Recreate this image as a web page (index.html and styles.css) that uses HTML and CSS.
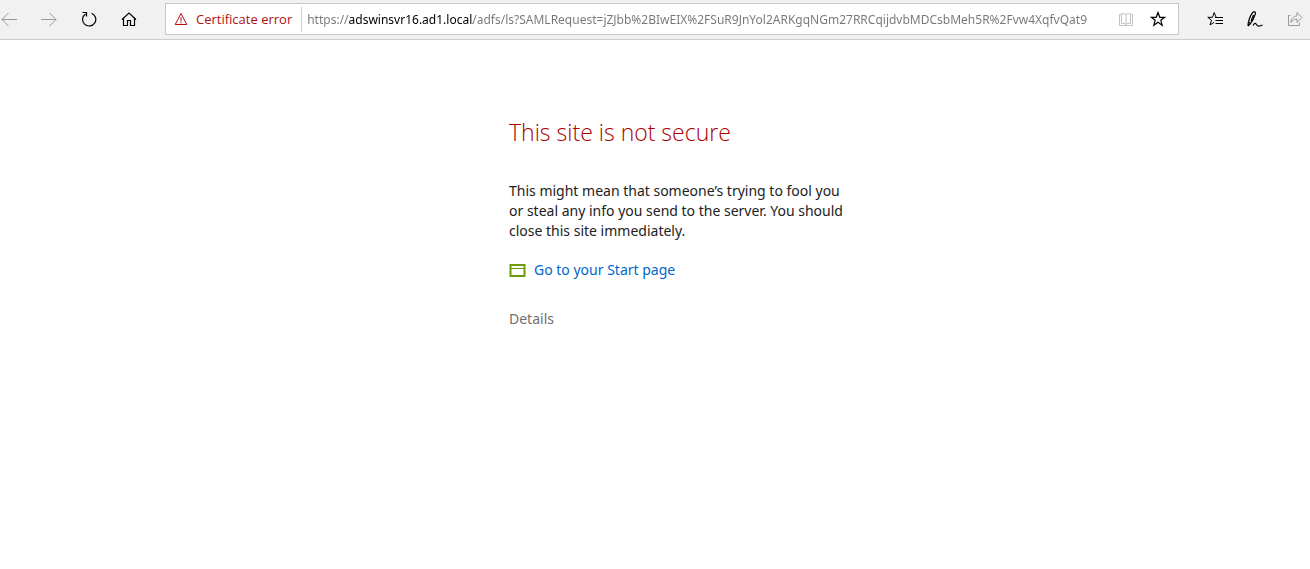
FILE: index.html
```html
<!DOCTYPE html>
<html lang="en">
<head>
  <meta charset="utf-8">
  <title>This site is not secure</title>
  <link rel="stylesheet" href="styles.css">
</head>
<body>
  <header class="toolbar">
    <nav class="tools">
      <button class="icon-btn muted" type="button" aria-label="Back" disabled>
        <svg viewBox="0 0 16 16"><path d="M16 8.5H1M7.5 2L1 8.5L7.5 15"/></svg>
      </button>
      <button class="icon-btn muted" type="button" aria-label="Forward" disabled>
        <svg viewBox="0 0 16 16"><path d="M0 8.5H15M8.5 2L15 8.5L8.5 15"/></svg>
      </button>
      <button class="icon-btn" type="button" aria-label="Refresh">
        <svg viewBox="0 0 16 16"><path class="bold" d="M10.5 2.2A6.6 6.6 0 1 1 4.5 2.9"/><path class="bold" d="M1.5 1.5H5.5V5.5"/></svg>
      </button>
      <button class="icon-btn" type="button" aria-label="Home">
        <svg viewBox="0 0 16 16"><path class="bold" d="M1 8.5L8 2L15 8.5M2.5 7.5V14.5H6.5V9.5H9.5V14.5H13.5V7.5"/></svg>
      </button>
    </nav>

    <form class="address">
      <button class="cert" type="button">
        <svg viewBox="0 0 14 14"><path d="M7 1.5L12.8 12.5H1.2ZM7 5V9.5M7 10.3V11.5"/></svg>
        Certificate error
      </button>
      <input class="url" type="text" aria-label="Address" spellcheck="false" value="https://adswinsvr16.ad1.local/adfs/ls?SAMLRequest=jZJbb%2BIwEIX%2FSuR9JnYol2ARKgqNGm27RRCqijdvbMDCsbMeh5R%2Fvw4XqfvQat9">
      <button class="icon-btn faint" type="button" aria-label="Reading view" disabled>
        <svg viewBox="0 0 16 16"><path d="M8 3.5V14.5M8 3.5C7 2.5 4.5 2.5 3.5 2.5V12.5H7L8 13.5L9 12.5H12.5V2.5C11.5 2.5 9 2.5 8 3.5M3.5 3.5H1.5V14.5H14.5V3.5H12.5"/></svg>
      </button>
      <button class="icon-btn" type="button" aria-label="Add to favorites">
        <svg viewBox="0 0 16 16"><path class="bold" d="M8 1.5L9.8 6.3H14.7L10.8 9.3L12.2 14.2L8 11.3L3.8 14.2L5.2 9.3L1.3 6.3H6.2Z"/></svg>
      </button>
    </form>

    <nav class="tools">
      <button class="icon-btn" type="button" aria-label="Favorites">
        <svg viewBox="0 0 16 16"><path d="M10 6.3H9L7.2 1.5L5.5 6.3H.8L4.5 9.2L3 14L7.2 11.3"/><path class="bold" d="M8 6.5H16M8.5 9.5H16M8.5 12.5H16"/></svg>
      </button>
      <button class="icon-btn" type="button" aria-label="Make a web note">
        <svg viewBox="0 0 16 16"><path class="bold" d="M1 15L1.3 11.5C2.5 7 4.5 2.5 6 1.2C7.5 0 9 1 8.3 3C7.2 6.5 5.5 10 3.5 12.5L1 15M1.5 11L3.5 12.5M4 10L6.5 4"/><path class="bold" d="M6 14.5C7.5 11.5 8.5 12 9.5 13.5C10.5 15.5 12.5 15.5 15.5 14"/></svg>
      </button>
      <button class="icon-btn muted" type="button" aria-label="Share" disabled>
        <svg viewBox="0 0 16 16"><path d="M3.5 4.5H1.5V14.5H12.5V11.5M4 11.5C4 7.5 6.5 5 10 5V1.5L15 6.5L10 11.5V8C7.5 8 5.5 9 4 11.5Z"/></svg>
      </button>
    </nav>
  </header>

  <main class="warning">
    <h1>This site is not secure</h1>
    <p>This might mean that someone’s trying to fool you or steal any info you send to the server. You should close this site immediately.</p>
    <a class="start-link" href="#">
      <svg viewBox="0 0 16 14"><path d="M1 2H15V13H1Z"/><path class="thin" d="M1 5.5H15"/></svg>
      Go to your Start page
    </a>
    <a class="details" href="#">Details</a>
  </main>
</body>
</html>
```

FILE: styles.css
```css
* {
  box-sizing: border-box;
}
body {
  margin: 0;
  background: #fff;
  font-family: "Noto Sans", "Open Sans", sans-serif;
  font-size: 14px;
  line-height: 20px;
  color: #222;
}
button {
  padding: 0;
  border: none;
  background: none;
  font: inherit;
}
svg {
  display: block;
  flex: none;
  fill: none;
  stroke: currentColor;
}
h1, p {
  margin: 0;
}

/* Toolbar */
.toolbar {
  display: flex;
  gap: 28px;
  height: 40px;
  padding: 3px 7px 4px 1px;
  background: #f1f1f1;
  border-bottom: 1px solid #ccc;
}
.tools {
  display: flex;
  align-items: center;
  gap: 24px;
}
.icon-btn {
  flex: none;
  color: #000;
}
.icon-btn svg {
  width: 16px;
  height: 16px;
}
.icon-btn .bold {
  stroke-width: 1.2;
}
.icon-btn.muted {
  color: #999;
}
.icon-btn.faint {
  color: #c4c4c4;
}

/* Address bar */
.address {
  display: flex;
  flex: 1;
  align-items: center;
  min-width: 0;
  padding-right: 12px;
  background: #fff;
  border: 1px solid #c8c8c8;
}
.cert {
  display: flex;
  align-items: center;
  gap: 8px;
  height: 25px;
  padding: 0 9px 0 8px;
  border-right: 1px solid #ccc;
  color: #b01010;
  font-family: "Open Sans", "Noto Sans", sans-serif;
  font-size: 13px;
  white-space: nowrap;
}
.cert svg {
  width: 14px;
  height: 14px;
}
.url {
  flex: 1;
  min-width: 0;
  height: 24px;
  margin: 0 11px 0 5px;
  padding: 0;
  border: none;
  outline: none;
  font-family: inherit;
  font-size: 12px;
  /* host name darker than the rest */
  background: linear-gradient(to right, #767676 42px, #000 42px, #000 166px, #767676 166px);
  -webkit-background-clip: text;
  background-clip: text;
  -webkit-text-fill-color: transparent;
}
.address .icon-btn + .icon-btn {
  margin-left: 16px;
}

/* Warning */
.warning {
  display: flex;
  flex-direction: column;
  align-items: flex-start;
  padding: 76px 0 0 calc(50% - 146px);
}
.warning h1 {
  margin-bottom: 33px;
  color: #a80000;
  font-family: "Open Sans", "Noto Sans", sans-serif;
  font-size: 23px;
  font-weight: 300;
  line-height: 32px;
}
.warning p {
  max-width: 344px;
  margin-bottom: 19px;
}
.start-link {
  display: flex;
  align-items: center;
  gap: 8px;
  margin-bottom: 29px;
  color: #0066cc;
  text-decoration: none;
}
.start-link svg {
  width: 17px;
  height: 14px;
  color: #6b9a0b;
  stroke-width: 2;
}
.start-link .thin {
  stroke-width: 1;
}
.details {
  color: #6e6e6e;
  text-decoration: none;
}
```
